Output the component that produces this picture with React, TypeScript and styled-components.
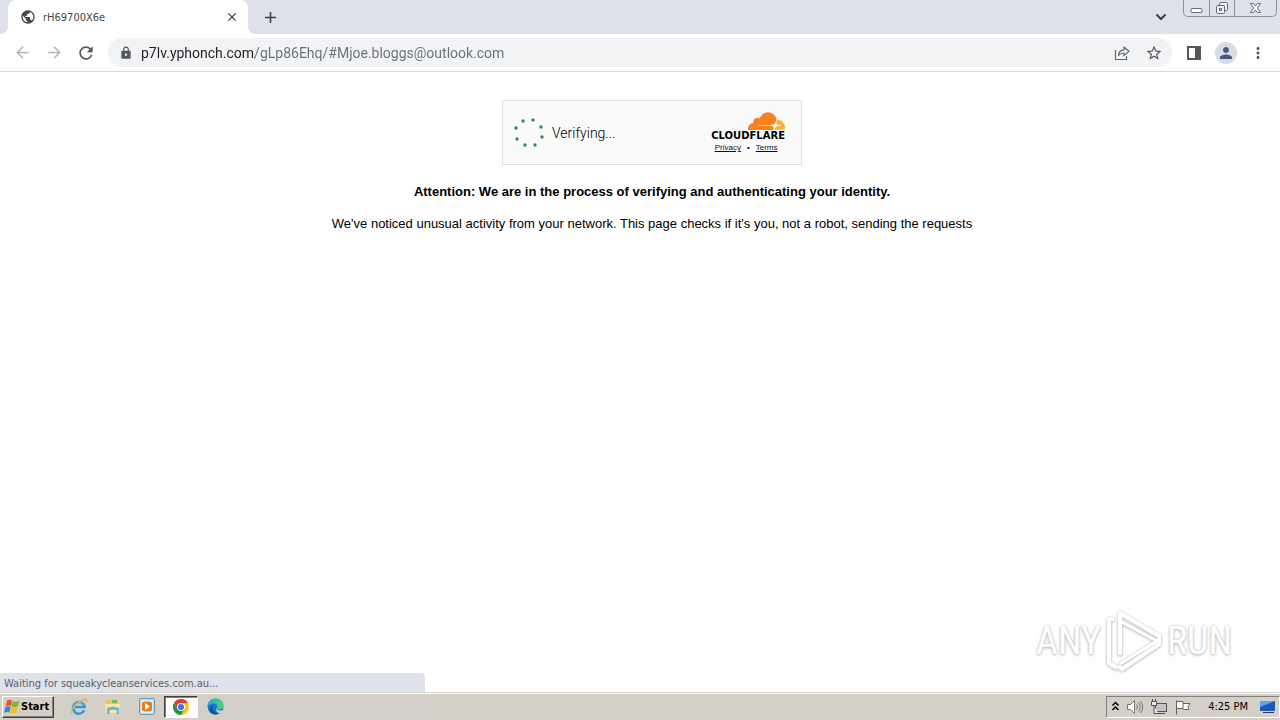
import React from "react";
import styled, { createGlobalStyle, css } from "styled-components";
import { MdArrowBack, MdArrowForward, MdRefresh, MdLock, MdStarBorder, MdPerson, MdMoreVert, MdPublic, MdClose, MdAdd } from "react-icons/md";

const GlobalStyle = createGlobalStyle`
  * { box-sizing: border-box; }
  body { margin: 0; font-family: "Liberation Sans", Arial, sans-serif; background: #fff; }
  button { font: inherit; color: inherit; padding: 0; border: 0; background: none; }
`;

const uiFont = css`
  font-family: "DejaVu Sans Condensed", "Noto Sans", sans-serif;
`;

const Desktop = styled.div`
  position: relative;
  min-height: 100vh;
  display: flex;
  flex-direction: column;
`;

const TabStrip = styled.header`
  display: flex;
  align-items: flex-start;
  height: 34px;
  background: #dee1e7;
  padding: 0 3px 0 8px;
`;

const Tab = styled.div`
  position: relative;
  display: flex;
  align-items: center;
  gap: 7px;
  width: 240px;
  height: 34px;
  padding: 0 8px 0 12px;
  background: #fff;
  border-radius: 8px 8px 0 0;
  color: #45484c;
  &::before,
  &::after {
    content: "";
    position: absolute;
    bottom: 0;
    width: 8px;
    height: 8px;
  }
  &::before {
    left: -8px;
    background: radial-gradient(circle at 0 0, transparent 8px, #fff 8px);
  }
  &::after {
    right: -8px;
    background: radial-gradient(circle at 100% 0, transparent 8px, #fff 8px);
  }
`;

const TabTitle = styled.span`
  ${uiFont}
  flex: 1;
  font-size: 11px;
`;

const IconButton = styled.button<{ $size?: number; $color?: string }>`
  display: flex;
  align-items: center;
  justify-content: center;
  flex: none;
  width: ${(p) => p.$size ?? 28}px;
  height: ${(p) => p.$size ?? 28}px;
  color: ${(p) => p.$color ?? "#54575b"};
`;

const NewTab = styled(IconButton)`
  margin: 3px auto 0 8px;
`;

const TabSearch = styled(IconButton)`
  margin: 3px 8px 0 0;
`;

const WindowControls = styled.div`
  display: flex;
  height: 17px;
  border: 1px solid #8d9199;
  border-top: 0;
  border-radius: 0 0 5px 5px;
`;

const WindowButton = styled.button<{ $width: number }>`
  display: flex;
  align-items: flex-start;
  justify-content: center;
  width: ${(p) => p.$width}px;
  & + & {
    border-left: 1px solid #8d9199;
  }
`;

const Toolbar = styled.nav`
  display: flex;
  align-items: center;
  gap: 4px;
  height: 38px;
  padding: 0 8px;
  border-bottom: 1px solid #d6d8db;
`;

const Omnibox = styled.div`
  display: flex;
  align-items: center;
  gap: 4px;
  flex: 1;
  height: 29px;
  margin: 0 4px;
  padding: 0 4px 0 11px;
  border-radius: 15px;
  background: #f1f3f4;
  color: #54575b;
`;

const Address = styled.input`
  font-family: Roboto, "Noto Sans", sans-serif;
  flex: 1;
  min-width: 0;
  height: 24px;
  padding: 0;
  margin-left: 4px;
  border: 0;
  outline: 0;
  font-size: 14px;
  color: #202124;
  background: linear-gradient(to right, #202124 114px, #6a6e73 114px);
  background-clip: text;
  -webkit-text-fill-color: transparent;
`;

const Avatar = styled.span`
  display: flex;
  align-items: center;
  justify-content: center;
  width: 22px;
  height: 22px;
  border-radius: 50%;
  background: #dadce3;
  color: #4b587c;
`;

const Page = styled.main`
  flex: 1;
  display: flex;
  flex-direction: column;
  align-items: center;
  padding: 28px 0 0 24px;
  color: #000;
`;

const Challenge = styled.section`
  display: flex;
  align-items: center;
  width: 300px;
  height: 65px;
  padding: 0 16px 0 11px;
  border: 1px solid #e0e0e0;
  background: #fafafa;
`;

const Verifying = styled.span`
  flex: 1;
  margin-left: 8px;
  font-family: Roboto, "Noto Sans", sans-serif;
  font-size: 14px;
  font-weight: 300;
`;

const Brand = styled.div`
  display: flex;
  flex-direction: column;
  align-items: center;
`;

const CloudMark = styled.svg`
  align-self: flex-end;
`;

const Wordmark = styled.span`
  font: bold 10px/11px "DejaVu Sans", sans-serif;
`;

const Legal = styled.div`
  display: flex;
  gap: 6px;
  margin: 2px 4px 0 0;
  font-size: 8px;
  line-height: 10px;
  a {
    color: #111;
  }
`;

const Heading = styled.h1`
  margin: 19px 0 0;
  font-size: 13px;
  line-height: 16px;
  font-weight: bold;
`;

const Notice = styled.p`
  margin: 16px 0 0;
  font-size: 13px;
  line-height: 16px;
`;

const StatusBubble = styled.div`
  ${uiFont}
  position: absolute;
  left: 0;
  bottom: 28px;
  width: 425px;
  height: 19px;
  padding-left: 4px;
  border-radius: 0 4px 0 0;
  background: #dfe2e8;
  color: #5d6167;
  font-size: 11px;
  line-height: 21px;
`;

const Watermark = styled.div`
  position: absolute;
  right: 48px;
  bottom: 45px;
  display: flex;
  align-items: center;
  gap: 4px;
  color: #fff;
  font: 38px/68px "Roboto Condensed", Roboto, sans-serif;
  text-shadow: 0 1px 3px #bbb, 0 0 3px #ccc;
  svg {
    filter: drop-shadow(0 1px 1px #ccc) drop-shadow(0 0 1px #ccc);
  }
`;

const Taskbar = styled.footer`
  display: flex;
  align-items: center;
  height: 28px;
  padding: 0 0 0 2px;
  border-top: 1px solid #d4d0c8;
  background: #d4d0c8;
  box-shadow: inset 0 1px #fff;
`;

const StartButton = styled.button`
  ${uiFont}
  display: flex;
  align-items: center;
  gap: 1px;
  width: 52px;
  height: 22px;
  margin-right: 8px;
  padding-left: 1px;
  border: 1px solid;
  border-color: #fff #404040 #404040 #fff;
  box-shadow: inset -1px -1px #808080;
  font-size: 11px;
  font-weight: bold;
`;

const TaskButton = styled.button<{ $active?: boolean }>`
  display: flex;
  align-items: center;
  justify-content: center;
  width: 34px;
  height: 22px;
  ${(p) =>
    p.$active &&
    css`
      background: #fff;
      border: 1px solid;
      border-color: #404040 #fff #fff #404040;
      box-shadow: inset 1px 1px #808080;
    `}
`;

const Tray = styled.div`
  display: flex;
  align-items: center;
  gap: 6px;
  height: 22px;
  margin-left: auto;
  padding: 0 3px 0 4px;
  border: 1px solid;
  border-color: #808080 #fff #fff #808080;
`;

const Clock = styled.time`
  ${uiFont}
  margin: 0 4px 0 10px;
  font-size: 11px;
  color: #000;
`;

const dots = [[9, 3], [19, 2], [27, 9], [28, 19], [21, 27], [11, 27], [3, 21], [2, 10]];

function Spinner() {
  return (
    <svg width="30" height="30" viewBox="0 0 30 30" fill="#2c8a62" aria-hidden="true">
      {dots.map(([x, y]) => <circle key={`${x}-${y}`} cx={x} cy={y} r="1.7" />)}
    </svg>
  );
}

function Cloud() {
  return (
    <CloudMark width="37" height="18" viewBox="0 6.4 24 11.1" preserveAspectRatio="none" aria-hidden="true">
      <path fill="#f6821f" d="M16.5088 16.8447c.1475-.5068.0908-.9707-.1553-1.3154-.2246-.3164-.6045-.499-1.0615-.5205l-8.6592-.1123a.1559.1559 0 0 1-.1333-.0713c-.0283-.042-.0351-.0986-.021-.1553.0278-.084.1123-.1484.2036-.1562l8.7359-.1123c1.0351-.0489 2.1601-.8868 2.5537-1.9136l.499-1.3013c.0215-.0561.0293-.1128.0147-.168-.5625-2.5463-2.835-4.4453-5.5499-4.4453-2.5039 0-4.6284 1.6177-5.3876 3.8614-.4927-.3658-1.1187-.5625-1.794-.499-1.2026.119-2.1665 1.083-2.2861 2.2856-.0283.31-.0069.6128.0635.894C1.5683 13.171 0 14.7754 0 16.752c0 .1748.0142.3515.0352.5273.0141.083.0844.1475.1689.1475h15.9814c.0909 0 .1758-.0645.2032-.1553l.12-.4268z" />
      <path fill="#fbad41" d="M19.2656 11.2813c-.0771 0-.1611 0-.2383.0112-.0566 0-.1054.0415-.127.0976l-.3378 1.1744c-.1475.5068-.0918.9707.1543 1.3164.2256.3164.6055.498 1.0625.5195l1.8437.1133c.0557 0 .1055.0263.1329.0703.0283.043.0351.1074.0214.1562-.0283.084-.1132.1485-.204.1553l-1.921.1123c-1.041.0488-2.1582.8867-2.5527 1.914l-.1406.3585c-.0283.0713.0215.1416.0986.1416h6.5977c.0771 0 .1474-.0489.169-.126.1122-.4082.1757-.837.1757-1.2803 0-2.6025-2.125-4.727-4.7344-4.727" />
    </CloudMark>
  );
}

function ShareIcon() {
  return (
    <svg width="16" height="16" viewBox="0 0 16 16" fill="none" stroke="#65686c" strokeWidth="1.2" aria-hidden="true">
      <path d="M1.5 5v9.5h11V11" />
      <path d="M4.5 10.5C4.7 7 6.8 5 10 4.800V2l5 4.300-5 4.300V8C7.500 8 5.800 8.800 4.500 10.500Z" strokeLinejoin="round" />
    </svg>
  );
}

function SidePanelIcon() {
  return (
    <svg width="14" height="14" viewBox="0 0 14 14" aria-hidden="true">
      <path fill="#54575b" fillRule="evenodd" d="M0 0h14v14H0zM2 2v10h6V2z" />
    </svg>
  );
}

function WindowsLogo() {
  return (
    <svg width="16" height="16" viewBox="0 0 16 16" aria-hidden="true">
      <path fill="#e9582c" d="M3 1.500c2-1.200 3.700-.9 5.300 0L6.900 7.300c-1.700-.9-3.400-1-5.300-.1z" />
      <path fill="#82b838" d="M8.900 2c1.900.9 3.900.9 6.600-.4l-1.700 5.900c-2.200 1.100-4.200 1.100-6.300.1z" />
      <path fill="#3b86d1" d="M1.400 7.900c1.800-.9 3.500-.8 5.300.1L5.200 13.800c-1.600-.9-3.300-1-5.200-.1z" />
      <path fill="#f6bd25" d="M7.300 8.300c2 .9 4 .9 6.300-.1l-1.500 5.600c-2.200 1-4.200 1-6.300.1z" />
    </svg>
  );
}

function ExplorerIcon() {
  return (
    <svg width="18" height="18" viewBox="0 0 18 18" fill="none" aria-hidden="true">
      <path d="M14.200 12.200A5.800 5.800 0 1 1 14.600 9H5" stroke="#2e9be0" strokeWidth="2.600" />
      <path d="M4.500 8.200A4.900 4.900 0 0 1 13.500 7" stroke="#7fd0f5" strokeWidth="1" />
      <path d="M2.500 15.500C-1 15 3 8 9 4s9-3.500 7.300.5" stroke="#e7b73b" strokeWidth="1.300" />
    </svg>
  );
}

function FolderIcon() {
  return (
    <svg width="18" height="16" viewBox="0 0 18 16" aria-hidden="true">
      <path fill="#e6c56a" d="M2 1h5l1 2h7v10H2z" />
      <path fill="#73b957" d="M8 1h5v3H8z" />
      <path fill="#f8e8a2" d="M1 5h15l-1 9H2z" />
      <path fill="#68b7e4" d="M3 9q6-3 12 0v6h-2.500v-4h-7v4H3z" />
    </svg>
  );
}

function MediaIcon() {
  return (
    <svg width="17" height="17" viewBox="0 0 17 17" aria-hidden="true">
      <rect x=".5" y=".5" width="15" height="16" rx="1" fill="#b9dcf2" stroke="#5b9bc8" />
      <rect x="2.500" y="2.500" width="11" height="12" fill="#fff" />
      <rect x="3" y="3.500" width="10" height="10" rx="2" fill="#ee7b12" />
      <path fill="#fff" d="m6 5 5 3.500-5 3.500z" />
    </svg>
  );
}

function ChromeIcon() {
  return (
    <svg width="16" height="16" viewBox="0 0 16 16" aria-hidden="true">
      <circle cx="8" cy="8" r="8" fill="#fbc116" />
      <path fill="#e33b2e" d="M1.070 4A8 8 0 0 1 14.930 4H8L4.540 10z" />
      <path fill="#229342" d="M1.070 4A8 8 0 0 0 8 16L11.460 10 8 12 4.540 10z" />
      <circle cx="8" cy="8" r="4" fill="#fff" />
      <circle cx="8" cy="8" r="3.100" fill="#2d7de9" />
    </svg>
  );
}

function EdgeIcon() {
  return (
    <svg width="17" height="17" viewBox="0 0 17 17" aria-hidden="true">
      <defs>
        <linearGradient id="edgeTop" x1="0" x2="1">
          <stop offset="0" stopColor="#2aa9df" />
          <stop offset="1" stopColor="#58d16a" />
        </linearGradient>
      </defs>
      <circle cx="8.500" cy="8.500" r="8" fill="#1478cc" />
      <path fill="url(#edgeTop)" d="M.5 8C1 3.500 4.500.5 8.500.5c5 0 8 3.400 8 6.700 0 2.800-2 4.300-4.200 4.300-2 0-3.300-.8-2.500-1.800 1.300-2-.4-4.200-3.200-4.200C3.700 5.500 1.200 7 .5 8z" />
      <path fill="#0d559f" d="M5.800 8c-1 4 2 7.300 6 7.500-5 2.500-9.300-.5-9.300-4 0-1.800 1.300-3.200 3.300-3.500z" />
      <path fill="#d4d0c8" d="M9.600 10c-.6 1.800 2 3.300 5.500 2.200l1 .5-2.600 2.600C10.500 15 8 12.500 9.600 10z" />
    </svg>
  );
}

function PlayMark() {
  return (
    <svg width="58" height="64" viewBox="0 0 58 64" fill="none" stroke="#fff" strokeWidth="4" strokeLinejoin="round" aria-hidden="true">
      <path d="M15 46V4l39 23v8L17 60l-4-3" />
      <path d="M15 12l37 20-37 23" strokeWidth="3" />
      <path d="M9 10H4v44l8 5" />
    </svg>
  );
}

export default function App() {
  return (
    <Desktop>
      <GlobalStyle />
      <TabStrip>
        <Tab>
          <MdPublic size={16} />
          <TabTitle>rH69700X6e</TabTitle>
          <IconButton $size={16} $color="#3c4043" aria-label="Close tab"><MdClose size={14} /></IconButton>
        </Tab>
        <NewTab $color="#3c4043" aria-label="New tab"><MdAdd size={19} /></NewTab>
        <TabSearch aria-label="Search tabs">
          <svg width="12" height="8" viewBox="0 0 12 8" fill="none" stroke="#3c4043" strokeWidth="2"><path d="m1.500 1.500 4.500 4.500 4.500-4.500" /></svg>
        </TabSearch>
        <WindowControls>
          <WindowButton $width={25} aria-label="Minimize">
            <svg width="13" height="15" viewBox="0 0 13 15" fill="#fff" stroke="#666a73"><rect x="1" y="8.500" width="11" height="4" rx="1" /></svg>
          </WindowButton>
          <WindowButton $width={25} aria-label="Restore">
            <svg width="14" height="15" viewBox="0 0 14 15" fill="#eef0f4" stroke="#666a73"><rect x="4.500" y="2.500" width="8" height="8" rx="1" /><rect x="1.500" y="5.500" width="8" height="8" rx="1" /><rect x="4.500" y="8.500" width="2" height="2" /></svg>
          </WindowButton>
          <WindowButton $width={42} aria-label="Close">
            <svg width="13" height="15" viewBox="0 0 13 15" fill="#fff" stroke="#666a73"><path d="M1.500 3.500h3l2 2.500 2-2.500h3L8.500 8l3 4.500h-3L6.500 10l-2 2.500h-3L4.500 8z" /></svg>
          </WindowButton>
        </WindowControls>
      </TabStrip>
      <Toolbar>
        <IconButton $color="#b4b6b9" aria-label="Back"><MdArrowBack size={19} /></IconButton>
        <IconButton $color="#b4b6b9" aria-label="Forward"><MdArrowForward size={19} /></IconButton>
        <IconButton aria-label="Reload"><MdRefresh size={20} /></IconButton>
        <Omnibox>
          <MdLock size={14} />
          <Address aria-label="Address" defaultValue="p7lv.yphonch.com/gLp86Ehq/#Mjoe.bloggs@outlook.com" />
          <IconButton aria-label="Share"><ShareIcon /></IconButton>
          <IconButton aria-label="Bookmark"><MdStarBorder size={18} /></IconButton>
        </Omnibox>
        <IconButton aria-label="Side panel"><SidePanelIcon /></IconButton>
        <IconButton aria-label="Profile"><Avatar><MdPerson size={18} /></Avatar></IconButton>
        <IconButton aria-label="Menu"><MdMoreVert size={18} /></IconButton>
      </Toolbar>
      <Page>
        <Challenge>
          <Spinner />
          <Verifying>Verifying...</Verifying>
          <Brand>
            <Cloud />
            <Wordmark>CLOUDFLARE</Wordmark>
            <Legal><a href="#privacy">Privacy</a><span>•</span><a href="#terms">Terms</a></Legal>
          </Brand>
        </Challenge>
        <Heading>Attention: We are in the process of verifying and authenticating your identity.</Heading>
        <Notice>We've noticed unusual activity from your network. This page checks if it's you, not a robot, sending the requests</Notice>
      </Page>
      <StatusBubble role="status">Waiting for squeakycleanservices.com.au...</StatusBubble>
      <Watermark><span>ANY</span><PlayMark /><span>RUN</span></Watermark>
      <Taskbar>
        <StartButton><WindowsLogo />Start</StartButton>
        <TaskButton aria-label="Internet Explorer"><ExplorerIcon /></TaskButton>
        <TaskButton aria-label="File Explorer"><FolderIcon /></TaskButton>
        <TaskButton aria-label="Media Player"><MediaIcon /></TaskButton>
        <TaskButton $active aria-label="Chrome"><ChromeIcon /></TaskButton>
        <TaskButton aria-label="Edge"><EdgeIcon /></TaskButton>
        <Tray>
          <svg width="9" height="11" viewBox="0 0 9 11" fill="none" stroke="#000" strokeWidth="1.500"><path d="m1.500 4.500 3-3 3 3M1.500 9l3-3 3 3" /></svg>
          <svg width="18" height="16" viewBox="0 0 18 16" fill="#fff" stroke="#77746e"><path d="M1.500 5.500h3l4-4v13l-4-4h-3z" /><path fill="none" d="M10.500 5.500q2 2.500 0 5M12.500 3.500q3.500 4.500 0 9M14.500 2q4.500 6 0 12" /></svg>
          <svg width="18" height="16" viewBox="0 0 18 16" fill="#eee" stroke="#55534f"><rect x="5.500" y="4.500" width="11" height="8" fill="#c4c4c4" /><path d="M8 14.500h7M1.500 2.500h5v4h-5zM2.500 0v2.500M5.500 0v2.500M4 6.500v8h4" /></svg>
          <svg width="18" height="16" viewBox="0 0 18 16" fill="#fff" stroke="#66635e"><path d="M2.500 1.500v14M3 2.500h6v7H3M9 4.500h7l-2 3 1 3H9" /></svg>
          <Clock>4:25 PM</Clock>
          <svg width="18" height="16" viewBox="0 0 18 16"><path fill="#1e59b5" d="M2 2h15v10H2z" /><path fill="#5fa1e8" d="M2 2h15L2 8z" /><path fill="#26364f" d="M5 13h11v1H5z" /></svg>
        </Tray>
      </Taskbar>
    </Desktop>
  );
}
